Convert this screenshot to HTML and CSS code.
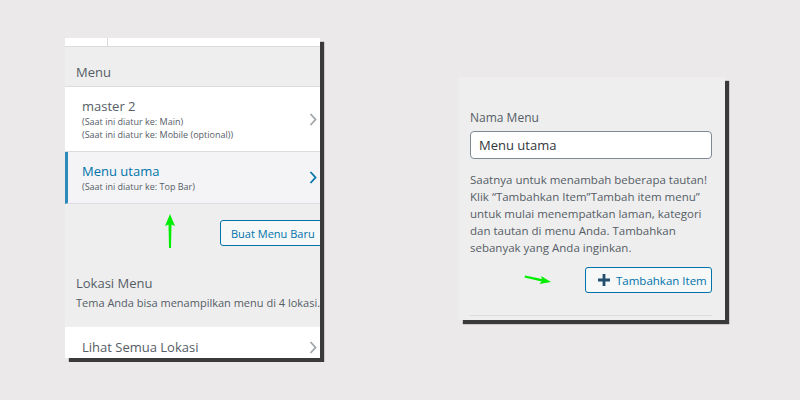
FILE: index.html
```html
<!DOCTYPE html>
<html lang="en">
<head>
    <meta charset="UTF-8">
    <meta name="viewport" content="width=device-width, initial-scale=1.0">
    <title>Menu</title>
    <link rel="stylesheet" href="styles.css">
</head>
<body>

<div class="stage">
    <div class="panel panel-left">
        <div class="topbar"><span class="tab"></span></div>
        <div class="section-title">Menu</div>
        <div class="menu-item">
            <div class="item-text">
                <div class="item-name">master 2</div>
                <div class="item-note">(Saat ini diatur ke: Main)</div>
                <div class="item-note">(Saat ini diatur ke: Mobile (optional))</div>
            </div>
            <svg class="chevron" width="8" height="13" viewBox="0 0 8 13"><polyline points="1.5,1 6.5,6.5 1.5,12" fill="none" stroke="currentColor" stroke-width="1.8"/></svg>
        </div>
        <div class="menu-item active">
            <div class="item-text">
                <div class="item-name">Menu utama</div>
                <div class="item-note">(Saat ini diatur ke: Top Bar)</div>
            </div>
            <svg class="chevron" width="8" height="13" viewBox="0 0 8 13"><polyline points="1.5,1 6.5,6.5 1.5,12" fill="none" stroke="currentColor" stroke-width="1.8"/></svg>
        </div>
        <div class="new-row">
            <button class="btn">Buat Menu Baru</button>
            <svg class="arrow arrow-up" width="12" height="36" viewBox="0 0 12 36"><path d="M6 1 L11 13 L7.5 11.5 L7 35 L5 35 L4.5 11.5 L1 13 Z" fill="#00ee00"/></svg>
        </div>
        <div class="locations">
            <div class="loc-title">Lokasi Menu</div>
            <div class="loc-desc">Tema Anda bisa menampilkan menu di 4 lokasi.</div>
        </div>
        <div class="menu-item all-locations">
            <div class="item-name">Lihat Semua Lokasi</div>
            <svg class="chevron" width="8" height="13" viewBox="0 0 8 13"><polyline points="1.5,1 6.5,6.5 1.5,12" fill="none" stroke="currentColor" stroke-width="1.8"/></svg>
        </div>
    </div>

    <div class="panel panel-right">
        <label class="field-label" for="menu-name">Nama Menu</label>
        <input class="field" type="text" id="menu-name" value="Menu utama">
        <p class="hint">Saatnya untuk menambah beberapa tautan! Klik “Tambahkan Item”Tambah item menu” untuk mulai menempatkan laman, kategori dan tautan di menu Anda. Tambahkan sebanyak yang Anda inginkan.</p>
        <div class="add-row">
            <svg class="arrow arrow-right" width="28" height="12" viewBox="0 0 28 12"><path d="M1 2.5 L18 6 L17 3 L27 9 L15.5 11 L17.5 8.5 L0.5 4.5 Z" fill="#00ee00"/></svg>
            <button class="btn btn-add">
                <svg width="12" height="12" viewBox="0 0 12 12"><path d="M4.6 0h2.8v4.6H12v2.8H7.4V12H4.6V7.4H0V4.6h4.6z" fill="#24506f"/></svg>
                Tambahkan Item
            </button>
        </div>
    </div>
</div>

</body>
</html>
```

FILE: styles.css
```css
body {
    margin: 0;
    background-color: #ebe9ea;
    font-family: "Open Sans", "Noto Sans", sans-serif;
    color: #555d66;
}

.stage {
    display: flex;
    align-items: flex-start;
    gap: 139px;
    padding: 38px 0 0 65px;
    height: 362px;
    box-sizing: border-box;
}

.panel {
    position: relative;
    flex-shrink: 0;
    background-color: #eeeeee;
    box-shadow: 4px 4px 1px #3a3a3a;
    overflow: hidden;
    box-sizing: border-box;
}

/* left panel */

.panel-left {
    width: 255px;
    height: 320px;
}

.topbar {
    height: 8px;
    background-color: white;
    border-bottom: 1px solid #dcdcde;
}

.tab {
    display: block;
    width: 42px;
    height: 8px;
    border-right: 1px solid #dcdcde;
}

.section-title {
    height: 40px;
    padding: 16px 0 0 11px;
    box-sizing: border-box;
    font-size: 13px;
    border-bottom: 1px solid #dcdcde;
}

.menu-item {
    display: flex;
    align-items: center;
    justify-content: space-between;
    padding: 10px 3px 10px 17px;
    background-color: white;
    border-bottom: 1px solid #dcdcde;
}

.menu-item .chevron {
    color: #a0a5aa;
}

.item-name {
    font-size: 13px;
    line-height: 18px;
    color: #555d66;
}

.item-note {
    font-size: 9px;
    line-height: 13px;
    color: #555d66;
}

.menu-item.active {
    background-color: #f4f4f6;
    border-left: 3px solid #2e8ab8;
    padding-left: 14px;
}

.menu-item.active .item-name,
.menu-item.active .chevron {
    color: #0073aa;
}

.new-row {
    position: relative;
    height: 123px;
}

.btn {
    font-family: "Open Sans", "Noto Sans", sans-serif;
    font-size: 12px;
    color: #0073aa;
    background-color: #f6f7f7;
    border: 1px solid #0073aa;
    border-radius: 3px;
    cursor: pointer;
}

.new-row .btn {
    position: absolute;
    top: 16px;
    left: 155px;
    width: 106px;
    height: 26px;
    padding: 0 0 0 10px;
    font-size: 11px;
    text-align: left;
}

.arrow {
    position: absolute;
}

.arrow-up {
    top: 9px;
    left: 99px;
}

.locations {
    padding: 0 0 10px 11px;
    margin-top: -54px;
    height: 54px;
    box-sizing: border-box;
}

.loc-title {
    font-size: 13px;
    line-height: 20px;
}

.loc-desc {
    font-size: 11px;
    line-height: 20px;
    white-space: nowrap;
}

.all-locations {
    border-bottom: none;
    padding-top: 11px;
}

/* right panel */

.panel-right {
    width: 266px;
    height: 243px;
    margin-top: 39px;
    padding: 32px 13px 0 11px;
}

.field-label {
    display: block;
    font-size: 12px;
    line-height: 18px;
}

.field {
    display: block;
    width: 100%;
    height: 28px;
    margin-top: 4px;
    padding: 0 8px;
    box-sizing: border-box;
    font-family: "Open Sans", "Noto Sans", sans-serif;
    font-size: 13px;
    color: #32373c;
    border: 1px solid #7e8993;
    border-radius: 4px;
    background-color: white;
}

.hint {
    margin: 12px 0 0;
    font-size: 11.5px;
    line-height: 17px;
}

.add-row {
    position: relative;
    display: flex;
    justify-content: flex-end;
    margin-top: 11px;
    padding-bottom: 22px;
    border-bottom: 1px solid #dcdcde;
}

.btn-add {
    display: flex;
    align-items: center;
    gap: 6px;
    width: 127px;
    height: 26px;
    padding: 0 0 0 12px;
    font-size: 11.5px;
}

.arrow-right {
    top: 6px;
    left: 54px;
}
```
